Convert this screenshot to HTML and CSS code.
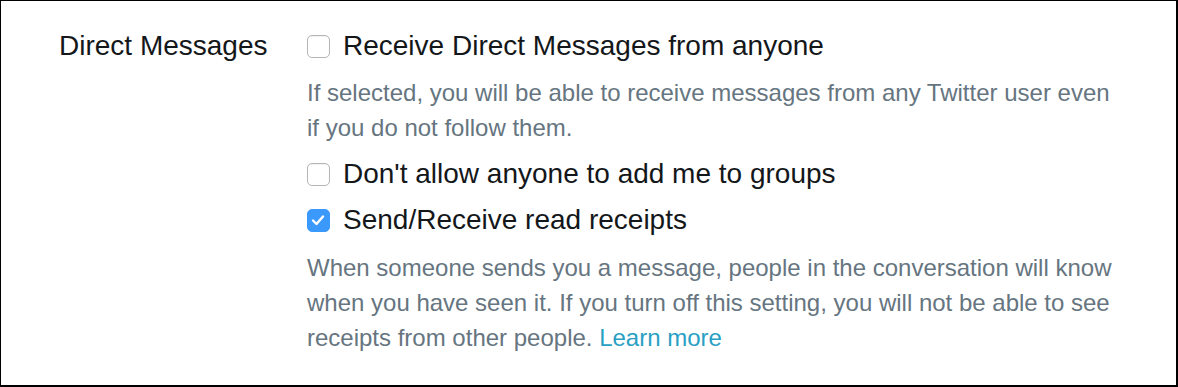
FILE: index.html
```html
<!DOCTYPE html>
<html>
<head>
<meta charset="utf-8">
<link rel="stylesheet" href="styles.css">
</head>
<body>
<div class="panel">
  <div class="label">Direct Messages</div>
  <div class="controls">
    <div class="option">
      <span class="box"></span>
      <span class="text">Receive Direct Messages from anyone</span>
    </div>
    <p class="desc first">If selected, you will be able to receive messages from any Twitter user even if you do not follow them.</p>
    <div class="option">
      <span class="box"></span>
      <span class="text">Don't allow anyone to add me to groups</span>
    </div>
    <div class="option">
      <span class="box checked"><svg viewBox="0 0 22 22" width="22" height="22"><path d="M6 11.5 L9.5 15 L16 7.5" fill="none" stroke="#fff" stroke-width="2.4" stroke-linecap="round" stroke-linejoin="round"/></svg></span>
      <span class="text">Send/Receive read receipts</span>
    </div>
    <p class="desc last">When someone sends you a message, people in the conversation will know when you have seen it. If you turn off this setting, you will not be able to see receipts from other people. <a class="link" href="#">Learn more</a></p>
  </div>
</div>
</body>
</html>
```
FILE: styles.css
```css
html, body {
  margin: 0;
  padding: 0;
  background: #fff;
}
body {
  font-family: "Liberation Sans", Arial, sans-serif;
}
.panel {
  box-sizing: border-box;
  width: 1178px;
  height: 387px;
  border-top: 1px solid #000;
  border-left: 1px solid #000;
  border-right: 2px solid #000;
  border-bottom: 2px solid #000;
  display: grid;
  grid-template-columns: 248px 1fr;
  padding: 22px 0 0 58px;
}
.label {
  font-size: 28px;
  line-height: 46px;
  color: #14171a;
}
.controls {
  display: flex;
  flex-direction: column;
}
.option {
  display: flex;
  align-items: center;
  gap: 13px;
  height: 46px;
}
.box {
  box-sizing: border-box;
  width: 23px;
  height: 23px;
  border: 1px solid #b5b5b5;
  border-radius: 5px;
  background: #fff;
  box-shadow: inset 0 1px 1px rgba(0,0,0,0.06);
  display: flex;
  flex: none;
}
.box.checked {
  background: #3b99fc;
  border-color: #3b99fc;
  box-shadow: none;
}
.box svg {
  margin: -1px;
}
.text {
  font-size: 28px;
  color: #14171a;
}
.desc {
  margin: 0;
  font-size: 24px;
  line-height: 35px;
  color: #66757f;
  max-width: 818px;
}
.desc.first {
  margin: 6px 0 6px;
}
.desc.last {
  margin-top: 7px;
}
.link {
  color: #2a9fc4;
  text-decoration: none;
}
```
